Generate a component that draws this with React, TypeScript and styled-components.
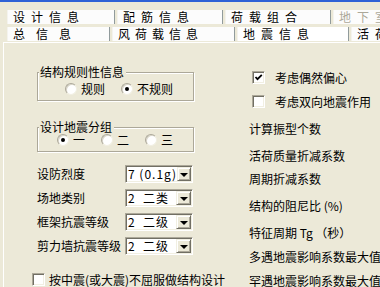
import React from "react";
import styled, { createGlobalStyle } from "styled-components";

const GlobalStyle = createGlobalStyle`
  html, body {
    margin: 0;
    padding: 0;
    background: #ece9d8;
  }
  body {
    font-family: "Noto Sans CJK SC", "Liberation Sans", sans-serif;
    font-size: 12px;
    line-height: 12px;
    color: #000;
    overflow: hidden;
  }
`;

const Window = styled.div`
  width: 380px;
  height: 287px;
  overflow: hidden;
  background: #ece9d8;
  white-space: nowrap;
`;

const TitleEdge = styled.div`
  height: 2px;
  background: #2f62d6;
`;

const TabStrip = styled.div`
  display: flex;
  flex-direction: column;
  gap: 3px;
  padding: 8px 0 1px 7px;
`;

const TabRow = styled.div`
  display: flex;
  height: 14px;
`;

const Tab = styled.div<{ $w: number; $spacing?: number; $disabled?: boolean; $active?: boolean }>`
  box-sizing: border-box;
  flex: 0 0 ${(p) => p.$w}px;
  height: 14px;
  margin-right: 2px;
  padding-left: 5px;
  background: ${(p) => (p.$active ? "#ffffff" : "#fcfcfc")};
  border-left: 1px solid #f4f3ee;
  border-right: 1px solid #919b9c;
  color: ${(p) => (p.$disabled ? "#aca899" : "#000")};
  letter-spacing: ${(p) => p.$spacing ?? 6}px;
  line-height: 14px;
`;

const Panel = styled.div`
  display: flex;
  height: 245px;
  margin-left: 3px;
  border-top: 1px solid #fff;
  border-left: 1px solid #fff;
`;

const LeftCol = styled.div`
  flex: 0 0 217px;
  padding-left: 28px;
  display: flex;
  flex-direction: column;
`;

const RightCol = styled.div`
  flex: 1;
  display: flex;
  flex-direction: column;
`;

const GroupBox = styled.div<{ $top: number; $h: number }>`
  position: relative;
  box-sizing: border-box;
  width: 157px;
  height: ${(p) => p.$h}px;
  margin: ${(p) => p.$top}px 0 0 5px;
  border: 1px solid #aca899;
  box-shadow: inset 1px 1px 0 #fff, 1px 1px 0 #fff;
`;

const Caption = styled.span`
  position: absolute;
  top: -7px;
  left: 1px;
  padding: 0 2px 0 1px;
  background: #ece9d8;
  line-height: 12px;
`;

const RadioRow = styled.div<{ $padTop: number; $padLeft: number }>`
  display: flex;
  gap: 16px;
  padding: ${(p) => p.$padTop}px 0 0 ${(p) => p.$padLeft}px;
`;

const RadioItem = styled.label`
  display: flex;
  align-items: center;
  gap: 4px;
  height: 12px;
`;

const RadioDot = styled.span<{ $on?: boolean }>`
  position: relative;
  box-sizing: border-box;
  width: 12px;
  height: 12px;
  border-radius: 50%;
  background: #fff;
  border: 1px solid;
  border-color: #aca899 #f1efe2 #f1efe2 #aca899;
  box-shadow: inset 1px 1px 0 #d8d5c8;

  &::after {
    content: "";
    display: ${(p) => (p.$on ? "block" : "none")};
    position: absolute;
    left: 3px;
    top: 3px;
    width: 4px;
    height: 4px;
    border-radius: 50%;
    background: #000;
  }
`;

const FieldRow = styled.div<{ $top: number }>`
  display: flex;
  align-items: center;
  height: 18px;
  margin: ${(p) => p.$top}px 0 0 5px;
`;

const FieldLabel = styled.span`
  flex: 0 0 88px;
`;

const Combo = styled.div`
  box-sizing: border-box;
  display: flex;
  align-items: center;
  width: 68px;
  height: 18px;
  padding: 1px 1px 1px 2px;
  background: #fff;
  border: 1px solid;
  border-color: #aca899 #fff #fff #aca899;
  box-shadow: inset 1px 1px 0 #716f64, inset -1px -1px 0 #f1efe2;
  white-space: pre;
`;

const ComboText = styled.span`
  flex: 1;
  line-height: 14px;
  letter-spacing: 1px;
`;

const DropButton = styled.span`
  box-sizing: border-box;
  display: flex;
  align-items: center;
  justify-content: center;
  width: 15px;
  height: 14px;
  background: #ece9d8;
  border: 1px solid;
  border-color: #f1efe2 #716f64 #716f64 #f1efe2;
  box-shadow: inset 1px 1px 0 #fff, inset -1px -1px 0 #aca899;

  &::after {
    content: "";
    border-left: 4px solid transparent;
    border-right: 4px solid transparent;
    border-top: 4px solid #000;
    margin-top: 1px;
  }
`;

const CheckRow = styled.label<{ $top: number; $left: number; $gap: number }>`
  display: flex;
  align-items: center;
  gap: ${(p) => p.$gap}px;
  height: 13px;
  margin: ${(p) => p.$top}px 0 0 ${(p) => p.$left}px;
`;

const CheckBox = styled.span`
  box-sizing: border-box;
  display: flex;
  align-items: center;
  justify-content: center;
  flex: 0 0 13px;
  height: 13px;
  background: #fff;
  border: 1px solid;
  border-color: #aca899 #fff #fff #aca899;
  box-shadow: inset 1px 1px 0 #716f64, inset -1px -1px 0 #f1efe2;
`;

const InfoLabel = styled.div<{ $top: number }>`
  margin-top: ${(p) => p.$top}px;
  height: 12px;
`;

const Check = () => (
  <svg width="9" height="9" viewBox="0 0 9 9">
    <path d="M1.5 4 L3.5 6.2 L7.8 1.8" fill="none" stroke="#000" strokeWidth="1.8" />
  </svg>
);

const Radio = ({ on, text }: { on?: boolean; text: string }) => (
  <RadioItem>
    <RadioDot $on={on} />
    <span>{text}</span>
  </RadioItem>
);

const Field = ({ top, label, value }: { top: number; label: string; value: string }) => (
  <FieldRow $top={top}>
    <FieldLabel>{label}</FieldLabel>
    <Combo>
      <ComboText>{value}</ComboText>
      <DropButton />
    </Combo>
  </FieldRow>
);

const infoRows: [number, string][] = [
  [15, "计算振型个数"],
  [15, "活荷质量折减系数"],
  [11, "周期折减系数"],
  [15, "结构的阻尼比 (%)"],
  [15, "特征周期 Tg （秒）"],
  [12, "多遇地震影响系数最大值"],
  [12, "罕遇地震影响系数最大值"],
];

export default function App() {
  return (
    <Window>
      <GlobalStyle />
      <TitleEdge />
      <TabStrip>
        <TabRow>
          <Tab $w={108}>设计信息</Tab>
          <Tab $w={106}>配筋信息</Tab>
          <Tab $w={106}>荷载组合</Tab>
          <Tab $w={60} $disabled>地下室</Tab>
        </TabRow>
        <TabRow>
          <Tab $w={103} $spacing={11}>总信息</Tab>
          <Tab $w={123} $spacing={5}>风荷载信息</Tab>
          <Tab $w={112} $active>地震信息</Tab>
          <Tab $w={60}>活荷载信息</Tab>
        </TabRow>
      </TabStrip>
      <Panel>
        <LeftCol>
          <GroupBox $top={29} $h={29}>
            <Caption>结构规则性信息</Caption>
            <RadioRow $padTop={10} $padLeft={27}>
              <Radio text="规则" />
              <Radio on text="不规则" />
            </RadioRow>
          </GroupBox>
          <GroupBox $top={26} $h={25}>
            <Caption>设计地震分组</Caption>
            <RadioRow $padTop={6} $padLeft={19}>
              <Radio on text="一" />
              <Radio text="二" />
              <Radio text="三" />
            </RadioRow>
          </GroupBox>
          <Field top={13} label="设防烈度" value="7 (0.1g)" />
          <Field top={6} label="场地类别" value="2  二类" />
          <Field top={6} label="框架抗震等级" value="2  二级" />
          <Field top={6} label="剪力墙抗震等级" value="2  二级" />
          <CheckRow $top={18} $left={0} $gap={4}>
            <CheckBox />
            <span>按中震(或大震)不屈服做结构设计</span>
          </CheckRow>
        </LeftCol>
        <RightCol>
          <CheckRow $top={28} $left={3} $gap={10}>
            <CheckBox>
              <Check />
            </CheckBox>
            <span>考虑偶然偏心</span>
          </CheckRow>
          <CheckRow $top={11} $left={3} $gap={10}>
            <CheckBox />
            <span>考虑双向地震作用</span>
          </CheckRow>
          {infoRows.map(([top, text]) => (
            <InfoLabel key={text} $top={top}>
              {text}
            </InfoLabel>
          ))}
        </RightCol>
      </Panel>
    </Window>
  );
}
